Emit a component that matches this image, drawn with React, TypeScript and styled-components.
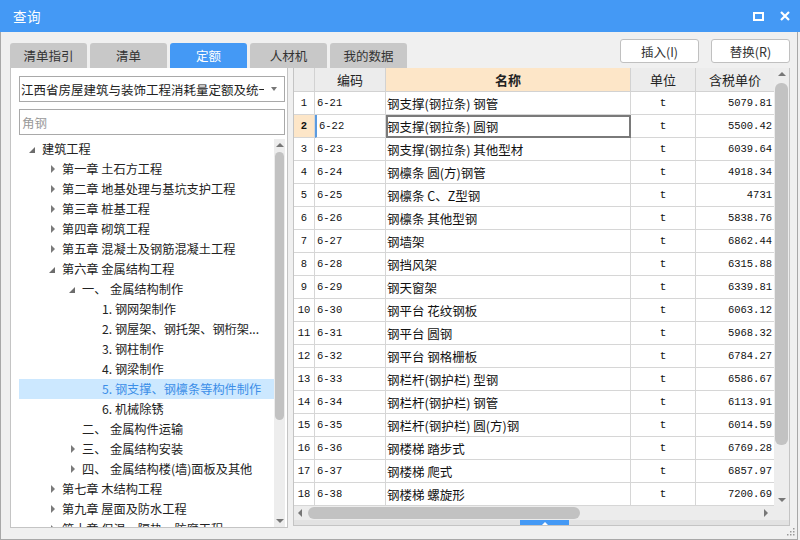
import styled, { createGlobalStyle } from 'styled-components';

const GlobalStyle = createGlobalStyle`
  html, body {
    margin: 0;
    padding: 0;
    background: #ffffff;
  }
  body {
    font-family: "Noto Sans CJK SC", "Noto Sans", sans-serif;
  }
`;

const BLUE = '#4499f5';
const COLS = '21px 71px 245px 65px 79px';

interface TreeNode {
    level: number;
    arrow?: 'open' | 'closed';
    prefix?: string;
    text: string;
    selected?: boolean;
}

const tree: TreeNode[] = [
    { level: 0, arrow: 'open', text: '建筑工程' },
    { level: 1, arrow: 'closed', text: '第一章 土石方工程' },
    { level: 1, arrow: 'closed', text: '第二章 地基处理与基坑支护工程' },
    { level: 1, arrow: 'closed', text: '第三章 桩基工程' },
    { level: 1, arrow: 'closed', text: '第四章 砌筑工程' },
    { level: 1, arrow: 'closed', text: '第五章 混凝土及钢筋混凝土工程' },
    { level: 1, arrow: 'open', text: '第六章 金属结构工程' },
    { level: 2, arrow: 'open', prefix: '一、', text: '金属结构制作' },
    { level: 3, text: '1. 钢网架制作' },
    { level: 3, text: '2. 钢屋架、钢托架、钢桁架...' },
    { level: 3, text: '3. 钢柱制作' },
    { level: 3, text: '4. 钢梁制作' },
    { level: 3, text: '5. 钢支撑、钢檩条等构件制作', selected: true },
    { level: 3, text: '6. 机械除锈' },
    { level: 2, prefix: '二、', text: '金属构件运输' },
    { level: 2, arrow: 'closed', prefix: '三、', text: '金属结构安装' },
    { level: 2, arrow: 'closed', prefix: '四、', text: '金属结构楼(墙)面板及其他' },
    { level: 1, arrow: 'closed', text: '第七章 木结构工程' },
    { level: 1, arrow: 'closed', text: '第九章 屋面及防水工程' },
    { level: 1, arrow: 'closed', text: '第十章 保温、隔热、防腐工程' },
];

const rows: [string, string, string][] = [
    ['6-21', '钢支撑(钢拉条) 钢管', '5079.81'],
    ['6-22', '钢支撑(钢拉条) 圆钢', '5500.42'],
    ['6-23', '钢支撑(钢拉条) 其他型材', '6039.64'],
    ['6-24', '钢檩条 圆(方)钢管', '4918.34'],
    ['6-25', '钢檩条 C、Z型钢', '4731'],
    ['6-26', '钢檩条 其他型钢', '5838.76'],
    ['6-27', '钢墙架', '6862.44'],
    ['6-28', '钢挡风架', '6315.88'],
    ['6-29', '钢天窗架', '6339.81'],
    ['6-30', '钢平台 花纹钢板', '6063.12'],
    ['6-31', '钢平台 圆钢', '5968.32'],
    ['6-32', '钢平台 钢格栅板', '6784.27'],
    ['6-33', '钢栏杆(钢护栏) 型钢', '6586.67'],
    ['6-34', '钢栏杆(钢护栏) 钢管', '6113.91'],
    ['6-35', '钢栏杆(钢护栏) 圆(方)钢', '6014.59'],
    ['6-36', '钢楼梯 踏步式', '6769.28'],
    ['6-37', '钢楼梯 爬式', '6857.97'],
    ['6-38', '钢楼梯 螺旋形', '7200.69'],
];

const tabs = ['清单指引', '清单', '定额', '人材机', '我的数据'];

export default function App() {
    return (
        <>
            <GlobalStyle />
            <Window>
                <TitleBar>
                    <Title>查询</Title>
                    <TitleIcons>
                        <svg width="11" height="9" viewBox="0 0 11 9">
                            <rect x="1" y="1" width="9" height="7" fill="none" stroke="#fff" strokeWidth="2" />
                        </svg>
                        <svg width="10" height="10" viewBox="0 0 10 10">
                            <path d="M1 1 L9 9 M9 1 L1 9" stroke="#fff" strokeWidth="2.2" />
                        </svg>
                    </TitleIcons>
                </TitleBar>
                <Body>
                    <TopRow>
                        <Tabs>
                            {tabs.map(t => (
                                <Tab key={t} $active={t === '定额'}>{t}</Tab>
                            ))}
                        </Tabs>
                        <Buttons>
                            <Button>插入(I)</Button>
                            <Button>替换(R)</Button>
                        </Buttons>
                    </TopRow>
                    <Main>
                        <LeftPanel>
                            <Select>
                                <SelectText>江西省房屋建筑与装饰工程消耗量定额及统一基价表</SelectText>
                                <SelectCaret />
                            </Select>
                            <Search placeholder="角钢" />
                            <TreeArea>
                                <TreeList>
                                    {tree.map((n, i) => (
                                        <TreeRow key={i} $level={n.level} $selected={!!n.selected}>
                                            <ArrowBox>
                                                {n.arrow === 'open' && <OpenArrow />}
                                                {n.arrow === 'closed' && <ClosedArrow />}
                                            </ArrowBox>
                                            {n.prefix && <Prefix>{n.prefix}</Prefix>}
                                            <span>{n.text}</span>
                                        </TreeRow>
                                    ))}
                                </TreeList>
                                <VScroll $width={11}>
                                    <UpArrow />
                                    <VThumb $top={13} $height={268} />
                                    <DownArrow />
                                </VScroll>
                            </TreeArea>
                        </LeftPanel>
                        <GridPanel>
                            <GridBody>
                                <Table>
                                    <HeaderRow>
                                        <HeadCell />
                                        <HeadCell>编码</HeadCell>
                                        <HeadCell $accent>名称</HeadCell>
                                        <HeadCell>单位</HeadCell>
                                        <HeadCell>含税单价</HeadCell>
                                    </HeaderRow>
                                    {rows.map((r, i) => {
                                        const current = i === 1;
                                        return (
                                            <Row key={r[0]}>
                                                <NumCell $current={current}>{i + 1}</NumCell>
                                                <CodeCell $current={current}>{r[0]}</CodeCell>
                                                <NameCell $focus={current}>{r[1]}</NameCell>
                                                <UnitCell>t</UnitCell>
                                                <PriceCell>{r[2]}</PriceCell>
                                            </Row>
                                        );
                                    })}
                                </Table>
                                <VScroll $width={15}>
                                    <UpArrow />
                                    <VThumb $top={15} $height={362} />
                                    <DownArrow />
                                </VScroll>
                            </GridBody>
                            <HScroll>
                                <LeftArrow />
                                <HThumb />
                                <RightArrow />
                            </HScroll>
                            <Splitter>
                                <SplitTab />
                            </Splitter>
                        </GridPanel>
                    </Main>
                    <Footer>
                        <Grip>
                            <svg width="8" height="8" viewBox="0 0 8 8">
                                {[[6, 0], [3, 3], [6, 3], [0, 6], [3, 6], [6, 6]].map(([x, y], k) => (
                                    <rect key={k} x={x} y={y} width="1.5" height="1.5" fill="#9a9a9a" />
                                ))}
                            </svg>
                        </Grip>
                    </Footer>
                </Body>
            </Window>
        </>
    );
}

const Window = styled.div`
    width: 800px;
    height: 540px;
    display: flex;
    flex-direction: column;
    background: #f0f0f0;
    overflow: hidden;
`

const TitleBar = styled.div`
    height: 32px;
    flex-shrink: 0;
    background: ${BLUE};
    display: flex;
    align-items: center;
    justify-content: space-between;
    padding: 0 10px 0 13px;
`

const Title = styled.span`
    color: #fff;
    font-size: 13.5px;
    letter-spacing: 0.5px;
`

const TitleIcons = styled.div`
    display: flex;
    align-items: center;
    gap: 16px;
`

const Body = styled.div`
    flex: 1;
    display: flex;
    flex-direction: column;
    border: 1px solid #a8a8a8;
    border-top: none;
    margin-right: 2px;
    padding: 0 7px 0 9px;
`

const TopRow = styled.div`
    height: 36px;
    display: flex;
    justify-content: space-between;
    align-items: flex-start;
`

const Tabs = styled.div`
    display: flex;
    gap: 3px;
    align-self: flex-end;
`

const Tab = styled.div<{ $active: boolean }>`
    width: 77px;
    height: 25px;
    display: flex;
    align-items: center;
    justify-content: center;
    border-radius: 3px 3px 0 0;
    background: ${p => (p.$active ? BLUE : '#c8c8c8')};
    color: ${p => (p.$active ? '#fff' : '#333')};
    font-size: 12.5px;
`

const Buttons = styled.div`
    display: flex;
    gap: 12px;
    padding-top: 7px;
`

const Button = styled.button`
    width: 79px;
    height: 24px;
    background: #fff;
    border: 1px solid #c0c0c0;
    border-radius: 3px;
    color: #333;
    font-family: "Noto Sans CJK SC", sans-serif;
    font-size: 12.5px;
    padding: 0;
`

const Main = styled.div`
    height: 460px;
    display: flex;
    gap: 5px;
`

const LeftPanel = styled.div`
    width: 278px;
    background: #fff;
    border: 1px solid #c4c4c4;
    border-top: none;
    padding: 8px 2px 0 8px;
    display: flex;
    flex-direction: column;
    gap: 7px;
    box-sizing: border-box;
`

const Select = styled.div`
    height: 26px;
    border: 1px solid #a9a9a9;
    box-sizing: border-box;
    display: flex;
    align-items: center;
    padding: 0 0 0 1px;
    flex-shrink: 0;
`

const SelectText = styled.span`
    flex: 1;
    white-space: nowrap;
    overflow: hidden;
    font-size: 12.5px;
    color: #222;
`

const SelectCaret = styled.span`
    width: 20px;
    display: flex;
    justify-content: center;
    &::after {
        content: '';
        border-left: 3px solid transparent;
        border-right: 3px solid transparent;
        border-top: 4px solid #777;
    }
`

const Search = styled.input`
    height: 26px;
    border: 1px solid #a9a9a9;
    box-sizing: border-box;
    padding: 0 2px;
    font-family: "Noto Sans CJK SC", sans-serif;
    font-size: 12.5px;
    outline: none;
    flex-shrink: 0;
    &::placeholder {
        color: #9a9a9a;
    }
`

const TreeArea = styled.div`
    flex: 1;
    display: flex;
    min-height: 0;
    margin-top: -3px;
`

const TreeList = styled.div`
    flex: 1;
    overflow: hidden;
    padding-top: 0;
`

const TreeRow = styled.div<{ $level: number; $selected: boolean }>`
    height: 20px;
    display: flex;
    align-items: center;
    padding-left: ${p => 3 + p.$level * 20}px;
    background: ${p => (p.$selected ? '#cce8ff' : 'transparent')};
    color: ${p => (p.$selected ? '#3b8ee8' : '#222')};
    font-size: 12.2px;
    white-space: nowrap;
`

const ArrowBox = styled.span`
    width: 20px;
    height: 20px;
    display: flex;
    align-items: center;
    justify-content: center;
    flex-shrink: 0;
`

const OpenArrow = styled.span`
    width: 0;
    height: 0;
    border-left: 6px solid transparent;
    border-bottom: 6px solid #6c6c6c;
    margin-top: 2px;
`

const ClosedArrow = styled.span`
    width: 0;
    height: 0;
    border-top: 4px solid transparent;
    border-bottom: 4px solid transparent;
    border-left: 4px solid #7a7a7a;
    margin-left: 2px;
`

const Prefix = styled.span`
    width: 28px;
    flex-shrink: 0;
`

const VScroll = styled.div<{ $width: number }>`
    width: ${p => p.$width}px;
    flex-shrink: 0;
    background: #ededed;
    position: relative;
`

const UpArrow = styled.span`
    position: absolute;
    top: 4px;
    left: 50%;
    transform: translateX(-50%);
    border-left: 4px solid transparent;
    border-right: 4px solid transparent;
    border-bottom: 4px solid #777;
`

const DownArrow = styled.span`
    position: absolute;
    bottom: 4px;
    left: 50%;
    transform: translateX(-50%);
    border-left: 4px solid transparent;
    border-right: 4px solid transparent;
    border-top: 4px solid #777;
`

const VThumb = styled.span<{ $top: number; $height: number }>`
    position: absolute;
    left: 1px;
    right: 1px;
    top: ${p => p.$top}px;
    height: ${p => p.$height}px;
    background: #c2c2c2;
    border-radius: 6px;
`

const GridPanel = styled.div`
    width: 497px;
    height: 458px;
    display: flex;
    flex-direction: column;
    border: 1px solid #c4c4c4;
    border-top: none;
    box-sizing: border-box;
    background: #ececec;
`

const GridBody = styled.div`
    display: flex;
    height: 438px;
    background: #fff;
`

const Table = styled.div`
    flex: 1;
    display: flex;
    flex-direction: column;
    overflow: hidden;
`

const HeaderRow = styled.div`
    display: grid;
    grid-template-columns: ${COLS};
    height: 24px;
`

const HeadCell = styled.div<{ $accent?: boolean }>`
    display: flex;
    align-items: center;
    justify-content: center;
    background: ${p => (p.$accent ? '#fde6c8' : '#ececec')};
    border-right: 1px solid #d2d2d2;
    border-bottom: 1px solid #d2d2d2;
    font-size: 13px;
    font-weight: ${p => (p.$accent ? 700 : 400)};
    color: #222;
`

const Row = styled.div`
    display: grid;
    grid-template-columns: ${COLS};
    height: 23px;
`

const Cell = styled.div`
    display: flex;
    align-items: center;
    border-right: 1px solid #d6d6d6;
    border-bottom: 1px solid #d6d6d6;
    box-sizing: border-box;
    color: #111;
    white-space: nowrap;
    overflow: hidden;
`

const NumCell = styled(Cell)<{ $current: boolean }>`
    justify-content: center;
    font-family: "Liberation Mono", monospace;
    font-size: 10.5px;
    font-weight: ${p => (p.$current ? 700 : 400)};
    background: ${p => (p.$current ? '#fde6c8' : '#fff')};
`

const CodeCell = styled(Cell)<{ $current: boolean }>`
    padding-left: 2px;
    font-family: "Liberation Mono", monospace;
    font-size: 10.5px;
    border-left: ${p => (p.$current ? `2px solid #5b9be0` : 'none')};
`

const NameCell = styled(Cell)<{ $focus: boolean }>`
    padding-left: 1px;
    font-size: 12.5px;
    ${p => (p.$focus ? 'outline: 2px solid #7a7a7a; outline-offset: -2px;' : '')}
`

const UnitCell = styled(Cell)`
    justify-content: center;
    font-family: "Liberation Mono", monospace;
    font-size: 11px;
`

const PriceCell = styled(Cell)`
    justify-content: flex-end;
    padding-right: 2px;
    font-family: "Liberation Mono", monospace;
    font-size: 10.5px;
`

const HScroll = styled.div`
    height: 14px;
    display: flex;
    align-items: center;
    padding: 0 6px 0 4px;
    margin-right: 15px;
    background: #ececec;
    gap: 6px;
`

const LeftArrow = styled.span`
    border-top: 4px solid transparent;
    border-bottom: 4px solid transparent;
    border-right: 4px solid #777;
`

const RightArrow = styled.span`
    margin-left: auto;
    border-top: 4px solid transparent;
    border-bottom: 4px solid transparent;
    border-left: 4px solid #777;
`

const HThumb = styled.span`
    width: 272px;
    height: 12px;
    background: #c2c2c2;
    border-radius: 6px;
`

const Splitter = styled.div`
    flex: 1;
    display: flex;
    justify-content: center;
    padding-left: 6px;
    background: #e2e2e2;
`

const SplitTab = styled.div`
    width: 49px;
    height: 5px;
    background: ${BLUE};
    display: flex;
    justify-content: center;
    &::after {
        content: '';
        margin-top: 1px;
        border-left: 3px solid transparent;
        border-right: 3px solid transparent;
        border-bottom: 3px solid #fff;
    }
`

const Footer = styled.div`
    flex: 1;
    display: flex;
    justify-content: flex-end;
    align-items: flex-end;
`

const Grip = styled.div`
    display: flex;
    padding: 0 0 3px;
    margin-right: -5px;
`
